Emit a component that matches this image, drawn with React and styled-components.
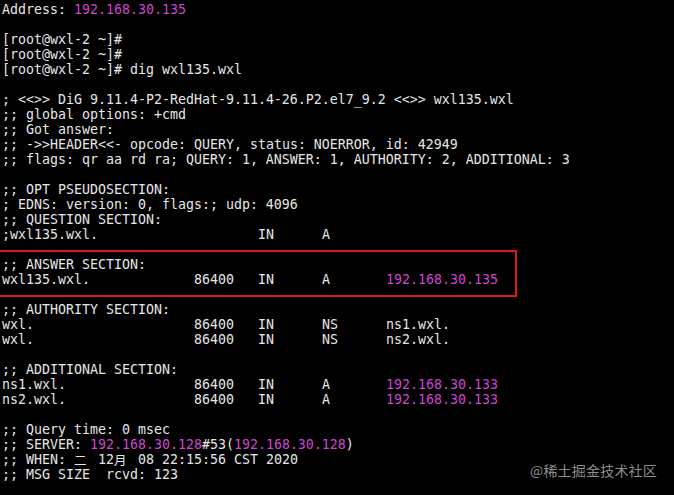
import React from "react";
import styled, { createGlobalStyle } from "styled-components";

const Global = createGlobalStyle`
  html, body { margin: 0; padding: 0; background: #000; }
  body { width: 674px; height: 495px; overflow: hidden; }
`;

const Screen = styled.div`
  position: relative;
  width: 674px;
  height: 495px;
  background: #000;
  box-sizing: border-box;
  padding: 2px 0 0 2px;
  font-family: "DejaVu Sans Mono", "Noto Sans CJK SC", monospace;
  font-size: 13.29px;
  line-height: 15px;
  color: #e6e6e6;
`;

const Line = styled.div`
  white-space: pre;
  height: 15px;
`;

const Ip = styled.span`
  color: #cf45cf;
`;

const Wide = styled.span`
  display: inline-block;
  width: 16px;
  height: 15px;
  vertical-align: top;
  font-family: "Noto Sans CJK SC", sans-serif;
  font-size: 12.5px;
  line-height: 15px;
  text-align: left;
`;

const Record = styled.div`
  display: grid;
  grid-template-columns: 192px 64px 64px 64px auto;
  white-space: pre;
  height: 15px;
`;

const Highlight = styled.div`
  position: relative;
  &::after {
    content: "";
    position: absolute;
    left: -4px;
    right: ${674 - 515 - 2}px;
    top: -7px;
    bottom: -10px;
    border: 2px solid #e3161c;
    pointer-events: none;
  }
`;

const Watermark = styled.div`
  position: absolute;
  right: 17px;
  bottom: 16px;
  font-family: "Noto Sans CJK SC", sans-serif;
  font-size: 14px;
  line-height: 18px;
  color: #8c8c8c;
  letter-spacing: 0.2px;
`;

const Row = ({ name, ttl, cls = "IN", type, data, ip }) => (
  <Record>
    <span>{name}</span>
    <span>{ttl}</span>
    <span>{cls}</span>
    <span>{type}</span>
    {ip ? <Ip>{data}</Ip> : <span>{data}</span>}
  </Record>
);

export default function App() {
  return (
    <>
      <Global />
      <Screen>
        <Line>
          Address: <Ip>192.168.30.135</Ip>
        </Line>
        <Line />
        <Line>[root@wxl-2 ~]#</Line>
        <Line>[root@wxl-2 ~]#</Line>
        <Line>[root@wxl-2 ~]# dig wxl135.wxl</Line>
        <Line />
        <Line>; {"<<>>"} DiG 9.11.4-P2-RedHat-9.11.4-26.P2.el7_9.2 {"<<>>"} wxl135.wxl</Line>
        <Line>;; global options: +cmd</Line>
        <Line>;; Got answer:</Line>
        <Line>;; -{">>"}HEADER{"<<"}- opcode: QUERY, status: NOERROR, id: 42949</Line>
        <Line>;; flags: qr aa rd ra; QUERY: 1, ANSWER: 1, AUTHORITY: 2, ADDITIONAL: 3</Line>
        <Line />
        <Line>;; OPT PSEUDOSECTION:</Line>
        <Line>; EDNS: version: 0, flags:; udp: 4096</Line>
        <Line>;; QUESTION SECTION:</Line>
        <Record>
          <span>;wxl135.wxl.</span>
          <span></span>
          <span>IN</span>
          <span>A</span>
        </Record>
        <Line />
        <Highlight>
          <Line>;; ANSWER SECTION:</Line>
          <Row name="wxl135.wxl." ttl="86400" type="A" data="192.168.30.135" ip />
        </Highlight>
        <Line />
        <Line>;; AUTHORITY SECTION:</Line>
        <Row name="wxl." ttl="86400" type="NS" data="ns1.wxl." />
        <Row name="wxl." ttl="86400" type="NS" data="ns2.wxl." />
        <Line />
        <Line>;; ADDITIONAL SECTION:</Line>
        <Row name="ns1.wxl." ttl="86400" type="A" data="192.168.30.133" ip />
        <Row name="ns2.wxl." ttl="86400" type="A" data="192.168.30.133" ip />
        <Line />
        <Line>;; Query time: 0 msec</Line>
        <Line>
          ;; SERVER: <Ip>192.168.30.128</Ip>#53(<Ip>192.168.30.128</Ip>)
        </Line>
        <Line>
          ;; WHEN: <Wide>二</Wide> 12<Wide>月</Wide> 08 22:15:56 CST 2020
        </Line>
        <Line>;; MSG SIZE  rcvd: 123</Line>
        <Watermark>@稀土掘金技术社区</Watermark>
      </Screen>
    </>
  );
}
